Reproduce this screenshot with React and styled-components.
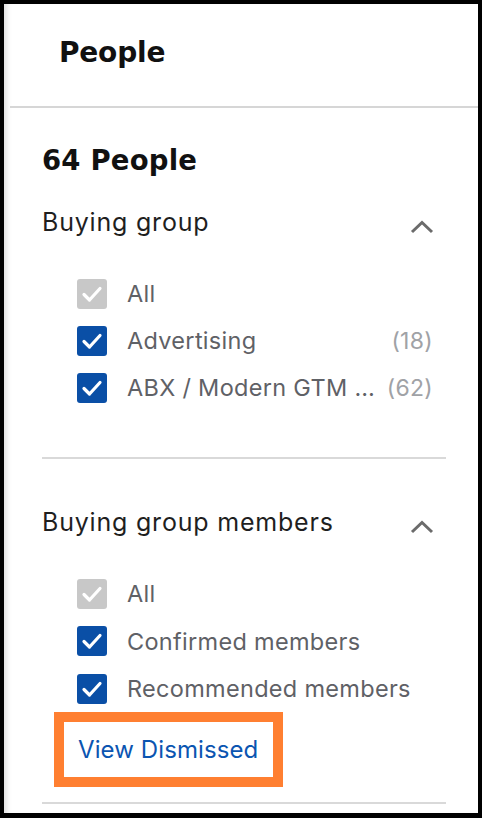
import React from "react"
import styled, { createGlobalStyle } from "styled-components"

const GlobalStyle = createGlobalStyle`
  html, body {
    margin: 0;
    padding: 0;
    background: #000;
  }
  body {
    font-family: Inter, "Liberation Sans", sans-serif;
  }
`

const Frame = styled.div`
  box-sizing: border-box;
  width: 482px;
  height: 818px;
  border: 4px solid #000;
  border-bottom-width: 5px;
  background: #fff;
  overflow: hidden;
  box-shadow: inset 6px 0 5px -3px rgba(0, 0, 0, 0.12);
`

const Header = styled.div`
  box-sizing: border-box;
  height: 104px;
  margin-left: 6px;
  padding-left: 49px;
  display: flex;
  align-items: center;
  border-bottom: 2px solid #d6d6d6;
`

const HeaderTitle = styled.h1`
  margin: 0;
  padding-bottom: 6px;
  font-family: "DejaVu Sans", Lato, sans-serif;
  font-weight: 700;
  font-size: 28px;
  letter-spacing: -0.2px;
  color: #111;
`

const Body = styled.div`
  padding: 34px 32px 0 38px;
`

const Count = styled.h2`
  margin: 0;
  font-family: "DejaVu Sans", Lato, sans-serif;
  font-weight: 700;
  font-size: 27.5px;
  line-height: 36px;
  letter-spacing: 0.2px;
  color: #111;
`

const Section = styled.section`
  padding-top: ${p => p.$top}px;
  padding-bottom: ${p => p.$bottom}px;
  border-bottom: 2px solid #d9d9d9;
`

const SectionHead = styled.div`
  display: flex;
  align-items: center;
  justify-content: space-between;
  height: 40px;
  padding-right: 12px;
`

const SectionTitle = styled.span`
  font-size: 25px;
  letter-spacing: 0.8px;
  color: #1f1f1f;
`

const Options = styled.ul`
  list-style: none;
  margin: 28px 0 0;
  padding: 0 13px 0 35px;
`

const Option = styled.li`
  display: flex;
  align-items: center;
  height: ${p => p.$pitch}px;
`

const Box = styled.span`
  flex: none;
  width: 30px;
  height: 30px;
  margin-right: 20px;
  border-radius: 3px;
  background: ${p => (p.$disabled ? "#c8c8c8" : "#0a4fa6")};
  display: flex;
  align-items: center;
  justify-content: center;
`

const Label = styled.span`
  flex: 1;
  min-width: 0;
  font-size: 23.5px;
  letter-spacing: 0.3px;
  color: #5f6166;
  white-space: nowrap;
  overflow: hidden;
  text-overflow: ellipsis;
`

const Tally = styled.span`
  flex: none;
  font-size: 23px;
  letter-spacing: 0.3px;
  color: #a0a2a6;
  margin-left: 8px;
`

const Highlight = styled.div`
  display: flex;
  align-items: center;
  width: fit-content;
  box-sizing: border-box;
  height: 75px;
  margin: -1px 0 0 12px;
  padding: 0 15px 0 14px;
  border: 10px solid #ff7f31;
`

const Link = styled.a`
  font-size: 24px;
  letter-spacing: 0.1px;
  color: #0b55b1;
  text-decoration: none;
  cursor: pointer;
`

const Check = () => (
  <svg width="24" height="24" viewBox="0 0 24 24">
    <polyline
      points="4,12.5 9.5,18 20,6.5"
      fill="none"
      stroke="#fff"
      strokeWidth="3.2"
      strokeLinecap="round"
      strokeLinejoin="round"
    />
  </svg>
)

const Chevron = () => (
  <svg width="24" height="14" viewBox="0 0 24 14" style={{ marginTop: 10 }}>
    <polyline
      points="2,12 12,2.5 22,12"
      fill="none"
      stroke="#6b6b6b"
      strokeWidth="3"
    />
  </svg>
)

const groups = [
  {
    title: "Buying group",
    top: 24,
    bottom: 46,
    pitch: 47,
    items: [
      { label: "All", disabled: true },
      { label: "Advertising", count: 18 },
      { label: "ABX / Modern GTM Initiative", count: 62 },
    ],
  },
  {
    title: "Buying group members",
    top: 43,
    bottom: 15,
    pitch: 47.5,
    items: [
      { label: "All", disabled: true },
      { label: "Confirmed members" },
      { label: "Recommended members" },
    ],
    dismissed: true,
  },
]

export default function App() {
  return (
    <>
      <GlobalStyle />
      <Frame>
        <Header>
          <HeaderTitle>People</HeaderTitle>
        </Header>
        <Body>
          <Count>64 People</Count>
          {groups.map(g => (
            <Section key={g.title} $top={g.top} $bottom={g.bottom}>
              <SectionHead>
                <SectionTitle>{g.title}</SectionTitle>
                <Chevron />
              </SectionHead>
              <Options>
                {g.items.map(item => (
                  <Option key={item.label} $pitch={g.pitch}>
                    <Box $disabled={item.disabled}>
                      <Check />
                    </Box>
                    <Label>{item.label}</Label>
                    {item.count != null && <Tally>({item.count})</Tally>}
                  </Option>
                ))}
              </Options>
              {g.dismissed && (
                <Highlight>
                  <Link>View Dismissed</Link>
                </Highlight>
              )}
            </Section>
          ))}
        </Body>
      </Frame>
    </>
  )
}
